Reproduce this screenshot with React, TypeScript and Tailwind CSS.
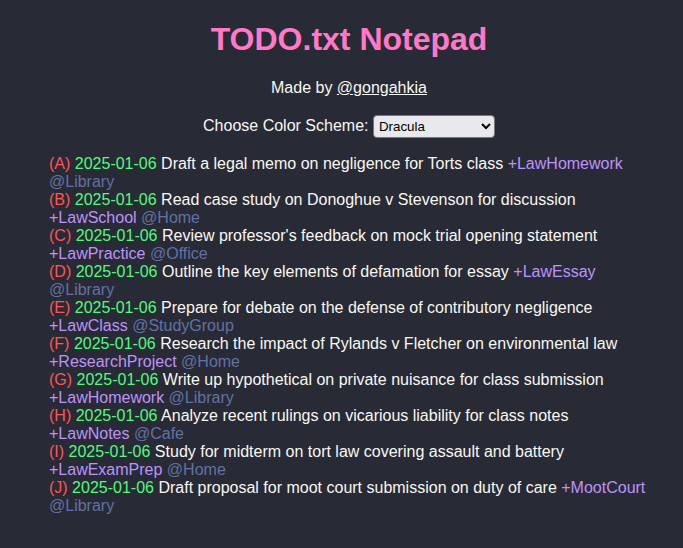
import { useState } from "react";

const TASKS = [
  { p: "A", text: "Draft a legal memo on negligence for Torts class", project: "LawHomework", context: "Library" },
  { p: "B", text: "Read case study on Donoghue v Stevenson for discussion", project: "LawSchool", context: "Home" },
  { p: "C", text: "Review professor's feedback on mock trial opening statement", project: "LawPractice", context: "Office" },
  { p: "D", text: "Outline the key elements of defamation for essay", project: "LawEssay", context: "Library" },
  { p: "E", text: "Prepare for debate on the defense of contributory negligence", project: "LawClass", context: "StudyGroup" },
  { p: "F", text: "Research the impact of Rylands v Fletcher on environmental law", project: "ResearchProject", context: "Home" },
  { p: "G", text: "Write up hypothetical on private nuisance for class submission", project: "LawHomework", context: "Library" },
  { p: "H", text: "Analyze recent rulings on vicarious liability for class notes", project: "LawNotes", context: "Cafe" },
  { p: "I", text: "Study for midterm on tort law covering assault and battery", project: "LawExamPrep", context: "Home" },
  { p: "J", text: "Draft proposal for moot court submission on duty of care", project: "MootCourt", context: "Library" },
];

const App = () => {
  const [scheme, setScheme] = useState("dracula");

  return (
    <div className="min-h-[548px] bg-[#282a36] font-['Liberation_Sans',Arial,sans-serif] text-[16px] leading-[1.15] text-[#f8f8f2]">
      <div className="w-[649px] pl-[49px] pt-[21px]">
        <h1 className="mb-[21px] text-center text-[32px] font-bold leading-[1.15] text-[#ff79c6]">
          TODO.txt Notepad
        </h1>

        <p className="mb-[18px] text-center">
          Made by{" "}
          <a href="#" className="underline">
            @gongahkia
          </a>
        </p>

        <p className="mb-[17px] text-center">
          Choose Color Scheme:{" "}
          <select
            value={scheme}
            onChange={(e) => setScheme(e.target.value)}
            className="h-[23px] w-[122px] rounded-[4px] border border-[#767676] bg-[#e9e9ed] pl-[1px] align-middle text-[13.33px] text-black"
          >
            <option value="dracula">Dracula</option>
            <option value="solarized">Solarized</option>
            <option value="monokai">Monokai</option>
            <option value="nord">Nord</option>
          </select>
        </p>

        <div className="leading-[18px]">
          {TASKS.map((t) => (
            <p key={t.p}>
              <span className="text-[#ff5555]">({t.p})</span>{" "}
              <span className="text-[#50fa7b]">2025-01-06</span> {t.text}{" "}
              <span className="text-[#bd93f9]">+{t.project}</span>{" "}
              <span className="text-[#6272a4]">@{t.context}</span>
            </p>
          ))}
        </div>
      </div>
    </div>
  );
};

export default App;
